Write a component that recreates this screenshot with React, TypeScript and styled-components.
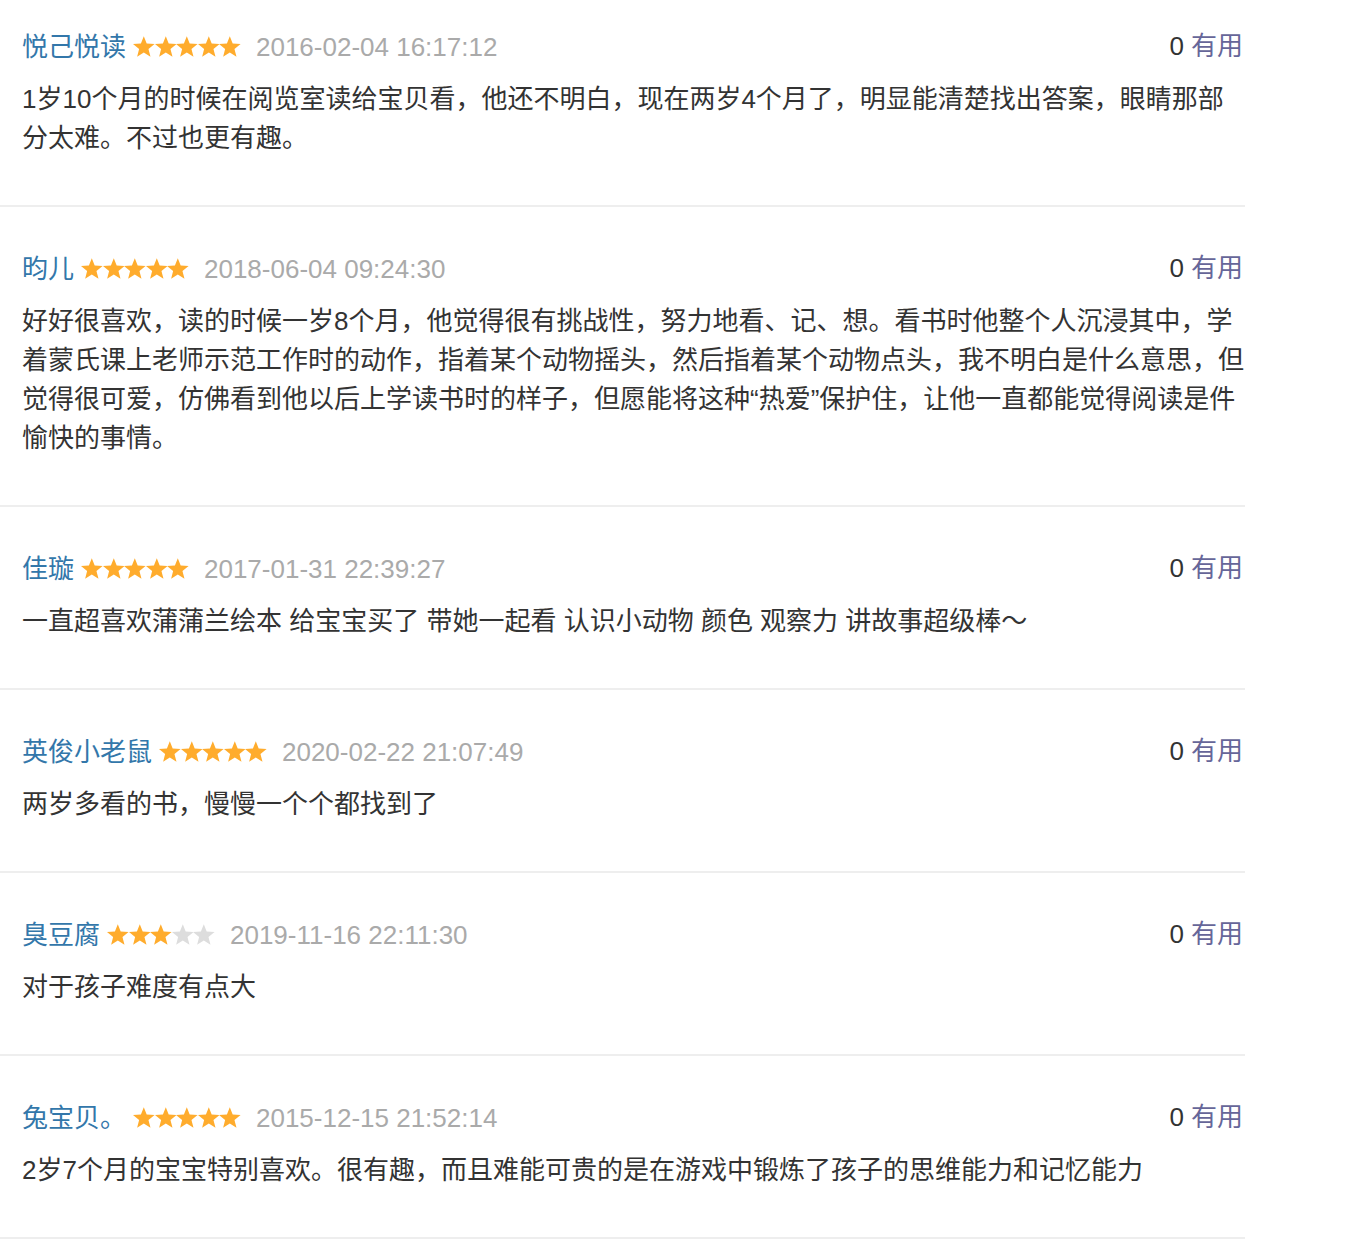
import styled, {createGlobalStyle} from 'styled-components';

type Review = {
    name: string;
    rating: number;
    date: string;
    useful: number;
    text: string;
};

const reviews: Review[] = [
    {
        name: '悦己悦读',
        rating: 5,
        date: '2016-02-04 16:17:12',
        useful: 0,
        text: '1岁10个月的时候在阅览室读给宝贝看，他还不明白，现在两岁4个月了，明显能清楚找出答案，眼睛那部分太难。不过也更有趣。',
    },
    {
        name: '昀儿',
        rating: 5,
        date: '2018-06-04 09:24:30',
        useful: 0,
        text: '好好很喜欢，读的时候一岁8个月，他觉得很有挑战性，努力地看、记、想。看书时他整个人沉浸其中，学着蒙氏课上老师示范工作时的动作，指着某个动物摇头，然后指着某个动物点头，我不明白是什么意思，但觉得很可爱，仿佛看到他以后上学读书时的样子，但愿能将这种“热爱”保护住，让他一直都能觉得阅读是件愉快的事情。',
    },
    {
        name: '佳璇',
        rating: 5,
        date: '2017-01-31 22:39:27',
        useful: 0,
        text: '一直超喜欢蒲蒲兰绘本 给宝宝买了 带她一起看 认识小动物 颜色 观察力 讲故事超级棒～',
    },
    {
        name: '英俊小老鼠',
        rating: 5,
        date: '2020-02-22 21:07:49',
        useful: 0,
        text: '两岁多看的书，慢慢一个个都找到了',
    },
    {
        name: '臭豆腐',
        rating: 3,
        date: '2019-11-16 22:11:30',
        useful: 0,
        text: '对于孩子难度有点大',
    },
    {
        name: '兔宝贝。',
        rating: 5,
        date: '2015-12-15 21:52:14',
        useful: 0,
        text: '2岁7个月的宝宝特别喜欢。很有趣，而且难能可贵的是在游戏中锻炼了孩子的思维能力和记忆能力',
    },
];

const Stars = ({rating}: {rating: number}) => (
    <StarRow>
        {[0, 1, 2, 3, 4].map(i => (
            <StarIcon key={i} viewBox="0 0 22 21" $on={i < rating}>
                <path d="M11 0L13.94 7.52L22 8L15.76 13.12L17.8 20.93L11 16.57L4.2 20.93L6.24 13.12L0 8L8.06 7.52Z"/>
            </StarIcon>
        ))}
    </StarRow>
);

export default function App() {
    return (
        <>
            <GlobalStyle/>
            <ReviewList>
                {reviews.map(r => (
                    <ReviewItem key={r.name}>
                        <ReviewHeader>
                            <Meta>
                                <Author>{r.name}</Author>
                                <Stars rating={r.rating}/>
                                <DateText>{r.date}</DateText>
                            </Meta>
                            <Useful>
                                {r.useful} <UsefulLink>有用</UsefulLink>
                            </Useful>
                        </ReviewHeader>
                        <ReviewText>{r.text}</ReviewText>
                    </ReviewItem>
                ))}
            </ReviewList>
        </>
    );
}

const GlobalStyle = createGlobalStyle`
    * {
        box-sizing: border-box;
    }

    body {
        margin: 0;
        background: #fff;
        font-family: "Liberation Sans", "Noto Sans CJK SC", sans-serif;
        color: #333;
    }
`

const ReviewList = styled.div`
    width: 1245px;
`

const ReviewItem = styled.div`
    padding: 43px 0 47px 22px;
    border-bottom: 2px solid #eeeeee;

    &:first-child {
        padding-top: 28px;
    }
`

const ReviewHeader = styled.div`
    display: flex;
    align-items: center;
    justify-content: space-between;
    height: 39px;
    line-height: 39px;
    padding-right: 2px;
    margin-bottom: 13px;
    font-size: 26px;
`

const Meta = styled.div`
    display: flex;
    align-items: center;
    height: 39px;
`

const Author = styled.span`
    color: #3377aa;
    margin-right: 7px;
`

const StarRow = styled.span`
    display: inline-flex;
    margin: -2px 15px 0 0;
`

const StarIcon = styled.svg<{ $on: boolean }>`
    width: 21.6px;
    height: 21px;
    fill: ${props => props.$on ? '#ffac2d' : '#dddddd'};
`

const DateText = styled.span`
    color: #aaaaaa;
`

const Useful = styled.span`
    display: flex;
    align-items: center;
    gap: 7px;
    height: 39px;
    margin-top: -2px;
    color: #333;
`

const UsefulLink = styled.span`
    color: #666699;
`

const ReviewText = styled.p`
    margin: 0;
    font-size: 26px;
    line-height: 39px;
    color: #333;
    word-break: break-all;
`
